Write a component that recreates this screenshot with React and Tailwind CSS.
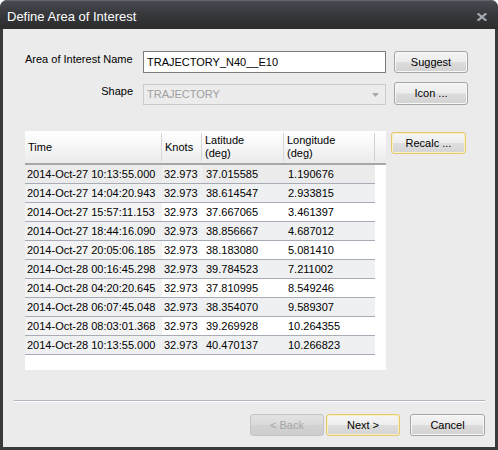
import React from "react";

const rows = [
  ["2014-Oct-27 10:13:55.000", "32.973", "37.015585", "1.190676"],
  ["2014-Oct-27 14:04:20.943", "32.973", "38.614547", "2.933815"],
  ["2014-Oct-27 15:57:11.153", "32.973", "37.667065", "3.461397"],
  ["2014-Oct-27 18:44:16.090", "32.973", "38.856667", "4.687012"],
  ["2014-Oct-27 20:05:06.185", "32.973", "38.183080", "5.081410"],
  ["2014-Oct-28 00:16:45.298", "32.973", "39.784523", "7.211002"],
  ["2014-Oct-28 04:20:20.645", "32.973", "37.810995", "8.549246"],
  ["2014-Oct-28 06:07:45.048", "32.973", "38.354070", "9.589307"],
  ["2014-Oct-28 08:03:01.368", "32.973", "39.269928", "10.264355"],
  ["2014-Oct-28 10:13:55.000", "32.973", "40.470137", "10.266823"],
];

// odd inner heights get a 13px line box, even ones 12px, so the text lands on whole pixels
const Button = ({ children, className = "", variant = "normal", lead = "leading-[12px]" }) => {
  const look =
    variant === "default"
      ? "border-[#e3c970] shadow-[inset_0_0_0_1px_#fbf0c4] bg-[linear-gradient(to_bottom,#f6f6f6_0%,#eeeeee_48%,#dedede_52%,#d4d4d4_100%)] text-black"
      : variant === "disabled"
      ? "border-[#c4c4c4] bg-[linear-gradient(to_bottom,#e2e2e2_0%,#dadada_48%,#d2d2d2_52%,#cdcdcd_100%)] text-[#a6a6a6]"
      : "border-[#a3a5a8] shadow-[inset_0_0_0_1px_#f8f8f8] bg-[linear-gradient(to_bottom,#f4f4f4_0%,#ececec_48%,#dcdcdc_52%,#d2d2d2_100%)] text-black";
  return (
    <button
      type="button"
      className={`flex items-center justify-center rounded-[3px] border text-[11px] font-normal ${lead} ${look} ${className}`}
    >
      {children}
    </button>
  );
};

const HeaderCell = ({ width, pad, children, last }) => (
  <div className="flex items-center h-full" style={{ width }}>
    <div className={`flex-1 leading-[13px] text-[11px] text-black ${pad}`}>{children}</div>
    <div className={`w-px h-[28px] ${last ? "bg-[#cfcfcf]" : "bg-[#d6d6d6]"}`} />
  </div>
);

export default function App() {
  return (
    <div
      className="w-[498px] h-[450px] bg-[#3a3a3a] rounded-t-[7px] flex flex-col overflow-hidden"
      style={{ fontFamily: '"Liberation Sans", Arial, sans-serif' }}
    >
      <div className="h-[29px] shrink-0 flex items-center justify-between pl-[7px] pr-[11px] pt-[3px] rounded-t-[7px] border-t border-[#62666d] bg-[linear-gradient(to_bottom,#484b51_0%,#383a3e_40%,#2c2c2c_100%)]">
        <span className="text-[13px] text-white leading-[14px]">Define Area of Interest</span>
        <svg width="10" height="8" viewBox="0 0 10 8">
          <path d="M1.5 1 L8.5 7 M8.5 1 L1.5 7" stroke="#a4aab2" strokeWidth="2.2" strokeLinecap="square" />
        </svg>
      </div>

      <div className="flex-1 mx-[3px] mb-[3px] bg-[#ebebeb] flex flex-col">
        <div className="flex items-start mt-[22px] pl-[22px]">
          <div className="w-[118px] pt-[1px] text-[11px] text-black leading-[14px]">Area of Interest Name</div>
          <div className="w-[243px] h-[22px] bg-white border border-[#7b7b7b] flex items-center pl-[3px] text-[11px] leading-[14px] text-black">
            TRAJECTORY_N40__E10
          </div>
          <Button className="ml-[8px] w-[74px] h-[22px]">Suggest</Button>
        </div>

        <div className="flex items-end mt-[9px] pl-[22px]">
          <div className="w-[108px] mb-[7px] text-right text-[11px] text-black leading-[14px]">Shape</div>
          <div className="ml-[10px] w-[243px] h-[21px] bg-[#ececec] border border-[#ccccc4] flex items-center justify-between pl-[3px] pr-[6px] text-[11px] leading-[13px] text-[#a0a0a0]">
            <span>TRAJECTORY</span>
            <svg width="7" height="4" viewBox="0 0 7 4">
              <path d="M0 0 L7 0 L3.5 4 Z" fill="#a8a8a8" />
            </svg>
          </div>
          <Button className="ml-[8px] w-[74px] h-[23px]" lead="leading-[13px]">Icon ...</Button>
        </div>

        <div className="flex items-start mt-[26px] pl-[22px]">
          <div className="w-[361px] h-[239px] bg-white flex flex-col">
            <div className="h-[34px] flex border-b-2 border-[#a5a7ab] bg-[linear-gradient(to_bottom,#ffffff_0%,#f7f7f7_45%,#ebebeb_100%)]">
              <HeaderCell width={137} pad="pl-[3px]">Time</HeaderCell>
              <HeaderCell width={40} pad="pl-[3px]">Knots</HeaderCell>
              <HeaderCell width={82} pad="pl-[3px]">Latitude<br />(deg)</HeaderCell>
              <HeaderCell width={91} pad="pl-[3px]" last>Longitude<br />(deg)</HeaderCell>
            </div>
            {rows.map((r, i) => {
              const first = i === 0;
              const even = i % 2 === 1;
              const rest = first ? "bg-[#ebebeb]" : even ? "bg-[#eff0f2]" : "bg-white";
              const lead = first ? "bg-[#ebebeb]" : even ? "bg-[#eff0f2]" : "bg-[#f3f3f3]";
              return (
                <div key={i} className="w-[350px] h-[19px] flex border-b border-[#a9acb6] text-[11px] text-black leading-[12px]">
                  <div className={`w-[137px] flex items-center pl-[2px] ${lead}`}>{r[0]}</div>
                  <div className={`w-[40px] flex items-center pl-[2px] ${first ? "bg-[#efefef]" : rest}`}>{r[1]}</div>
                  <div className={`w-[82px] flex items-center pl-[4px] ${rest}`}>{r[2]}</div>
                  <div className={`w-[91px] flex items-center pl-[4px] ${rest}`}>{r[3]}</div>
                </div>
              );
            })}
          </div>
          <Button variant="default" className="ml-[5px] mt-[1px] w-[75px] h-[22px]">Recalc ...</Button>
        </div>

        <div className="mt-[30px] ml-[11px] w-[471px] h-[2px] border-t border-[#b2b5bf] border-b border-b-white" />

        <div className="flex justify-end mt-[12px] pr-[10px]">
          <Button variant="disabled" className="w-[74px] h-[22px]">&lt; Back</Button>
          <Button variant="default" className="ml-[2px] w-[74px] h-[22px]">Next &gt;</Button>
          <Button className="ml-[10px] w-[75px] h-[22px]">Cancel</Button>
        </div>
      </div>
    </div>
  );
}
